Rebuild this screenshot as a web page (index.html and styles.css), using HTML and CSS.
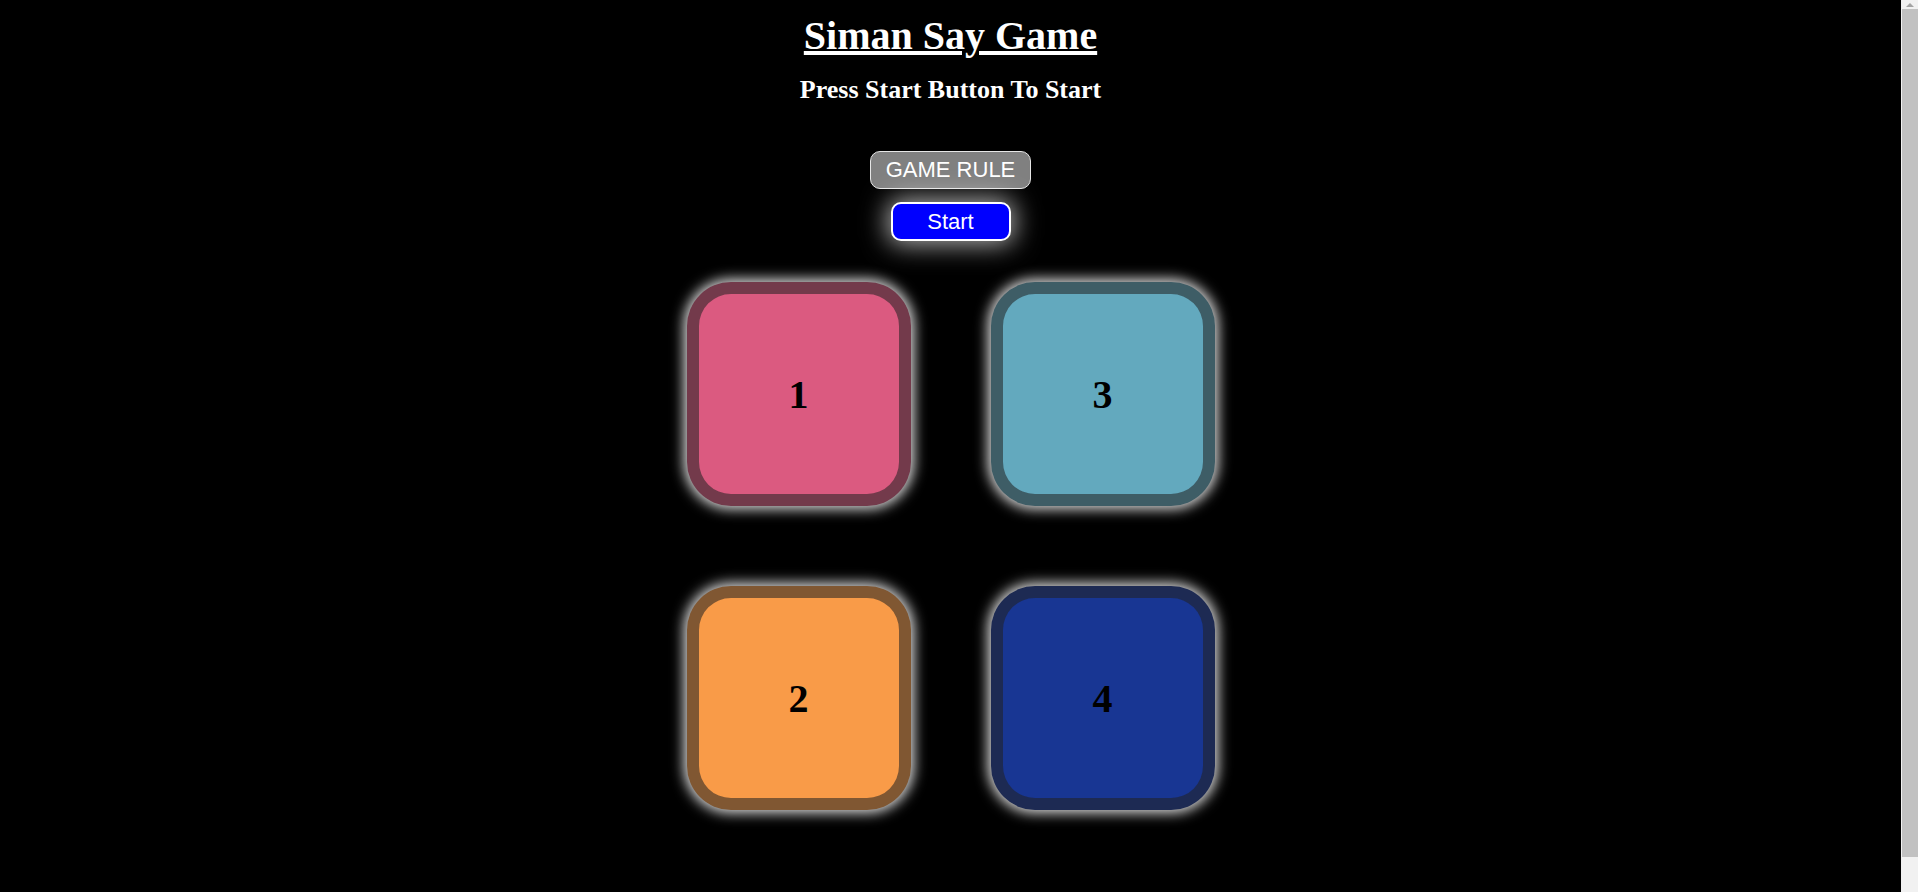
FILE: index.html
```html
<!DOCTYPE html>
<html lang="en">
<head>
<meta charset="utf-8">
<title>Simon Says</title>
<link rel="stylesheet" href="styles.css">
</head>
<body>
  <header class="head">
    <h1 class="title">Siman Say Game</h1>
    <h2 class="subtitle">Press Start Button To Start</h2>
  </header>
  <div class="controls">
    <button class="btn btn-rule">GAME RULE</button>
    <button class="btn btn-start">Start</button>
  </div>
  <main class="board">
    <div class="pad pad-red">1</div>
    <div class="pad pad-teal">3</div>
    <div class="pad pad-orange">2</div>
    <div class="pad pad-blue">4</div>
  </main>
  <div class="scrollbar" aria-hidden="true">
    <div class="scroll-arrow"></div>
    <div class="scroll-thumb"></div>
  </div>
</body>
</html>
```
FILE: styles.css
```css
html, body {
  background: #000;
}
html {
  overflow: hidden;
}
body {
  margin: 0 17px 0 0;
  padding: 12px 0 60px;
  color: #fff;
  font-family: "Liberation Serif", "Times New Roman", serif;
  text-align: center;
}
.head {
  display: flex;
  flex-direction: column;
  align-items: center;
}
.title {
  margin: 0;
  font-size: 40px;
  font-weight: bold;
  text-decoration: underline;
  line-height: normal;
}
.subtitle {
  margin: 16px 0 0;
  font-size: 26px;
  font-weight: bold;
  line-height: normal;
}
.controls {
  display: flex;
  flex-direction: column;
  align-items: center;
  gap: 13px;
  margin-top: 46px;
}
.btn {
  font-family: "Liberation Sans", Arial, sans-serif;
  font-size: 22px;
  color: #fff;
  cursor: pointer;
  line-height: normal;
}
.btn-rule {
  width: 161px;
  height: 38px;
  background: #808080;
  border: 1px solid #e6e6e6;
  border-radius: 10px;
}
.btn-start {
  width: 120px;
  height: 39px;
  background: #0000ff;
  border: 2px solid #fff;
  border-radius: 10px;
  box-shadow: 0 0 26px 3px rgba(255,255,255,0.7);
}
.board {
  display: grid;
  grid-template-columns: 224px 224px;
  gap: 80px;
  justify-content: center;
  margin-top: 41px;
}
.pad {
  box-sizing: border-box;
  width: 224px;
  height: 224px;
  border: 12px solid rgba(33,33,33,0.56);
  border-radius: 44px;
  display: flex;
  align-items: center;
  justify-content: center;
  color: #000;
  font-size: 40px;
  font-weight: bold;
  box-shadow: 0 0 13px 3px rgba(255,255,255,0.88);
}
.pad-red { background: #db5a80; }
.pad-teal { background: #63a9be; }
.pad-orange { background: #f99b48; }
.pad-blue { background: #183693; }

.scrollbar {
  position: fixed;
  top: 0;
  right: 0;
  width: 17px;
  height: 100%;
  background: #f1f1f1;
  display: flex;
  flex-direction: column;
  align-items: center;
}
.scroll-arrow {
  width: 0;
  height: 0;
  margin-top: 3px;
  border-left: 4px solid transparent;
  border-right: 4px solid transparent;
  border-bottom: 4px solid #a3a3a3;
}
.scroll-thumb {
  margin-top: 2px;
  width: 16px;
  margin-left: 1px;
  height: 848px;
  background: #c1c1c1;
}
```
